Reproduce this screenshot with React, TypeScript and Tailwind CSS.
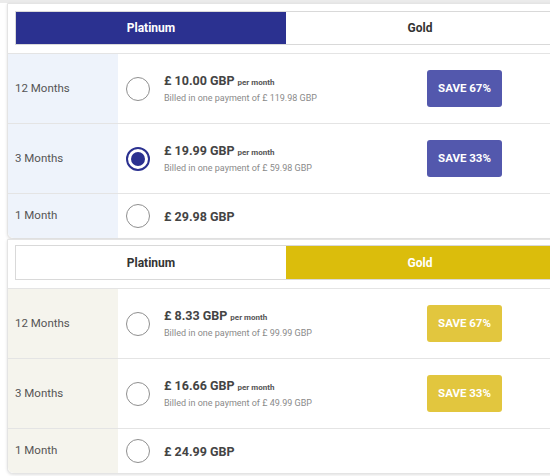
import React from 'react'

type Plan = {
  term: string
  price: string
  perMonth?: boolean
  billed?: string
  save?: string
  checked?: boolean
}

const platinum: Plan[] = [
  { term: '12 Months', price: '£ 10.00 GBP', perMonth: true, billed: 'Billed in one payment of £ 119.98 GBP', save: 'SAVE 67%' },
  { term: '3 Months', price: '£ 19.99 GBP', perMonth: true, billed: 'Billed in one payment of £ 59.98 GBP', save: 'SAVE 33%', checked: true },
  { term: '1 Month', price: '£ 29.98 GBP' },
]

const gold: Plan[] = [
  { term: '12 Months', price: '£ 8.33 GBP', perMonth: true, billed: 'Billed in one payment of £ 99.99 GBP', save: 'SAVE 67%' },
  { term: '3 Months', price: '£ 16.66 GBP', perMonth: true, billed: 'Billed in one payment of £ 49.99 GBP', save: 'SAVE 33%' },
  { term: '1 Month', price: '£ 24.99 GBP' },
]

function Radio({ checked }: { checked?: boolean }) {
  if (checked) {
    return (
      <span className="flex h-[24px] w-[24px] shrink-0 items-center justify-center rounded-full border-2 border-[#2b3190] bg-white">
        <span className="h-[14px] w-[14px] rounded-full bg-[#2b3190]" />
      </span>
    )
  }
  return <span className="h-[24px] w-[24px] shrink-0 rounded-full border border-[#8f8f8f] bg-white" />
}

function PlanCard({ tier, plans, top }: { tier: 'platinum' | 'gold'; plans: Plan[]; top: string }) {
  const isGold = tier === 'gold'
  return (
    <div className={`ml-[7px] w-[556px] rounded-b-md border border-[#e4e4e4] bg-white shadow-[0_1px_3px_rgba(0,0,0,0.12)] ${top}`}>
      {/* Tier switch */}
      <div className="px-[7px] pb-2">
        <div className={`flex border border-[#d9d9d9] text-[12px] font-bold ${isGold ? 'h-[35px]' : 'h-[34px]'}`}>
          <div className={`flex w-[270px] items-center justify-center ${isGold ? 'bg-white text-[#333]' : 'bg-[#2b3190] text-white'}`}>
            Platinum
          </div>
          <div className={`flex flex-1 items-center justify-center ${isGold ? 'bg-[#dbbd0c] text-white' : 'bg-white text-[#333]'}`}>
            Gold
          </div>
        </div>
      </div>

      {/* Plan rows */}
      {plans.map((p, i) => {
        const last = i === plans.length - 1
        return (
          <div key={p.term} className={`flex border-t border-[#e4e4e4] ${last ? 'h-[45px]' : 'h-[70px]'}`}>
            <div className={`flex w-[110px] shrink-0 items-center pl-[7px] text-[11.5px] text-[#555] ${isGold ? 'bg-[#f5f4ed]' : 'bg-[#eef3fb]'} ${last ? 'rounded-bl-md' : ''}`}>
              {p.term}
            </div>
            <div className="flex flex-1 items-center pl-2">
              <Radio checked={p.checked} />
              <div className="ml-[14px] w-[263px] shrink-0">
                <div className="text-[12.5px] font-bold leading-[15px] text-[#444]">
                  {p.price}
                  {p.perMonth && <span className="ml-[3px] text-[8px] font-bold text-[#555]">per month</span>}
                </div>
                {p.billed && <div className="mt-[3px] text-[9px] leading-[11px] text-[#8a8a8a]">{p.billed}</div>}
              </div>
              {p.save && (
                <div
                  className={`flex h-[37px] w-[75px] items-center justify-center rounded-[3px] text-[11.5px] font-bold text-white ${
                    isGold ? 'bg-[#e2c63e]' : 'bg-[#5358ad]'
                  }`}
                >
                  {p.save}
                </div>
              )}
            </div>
          </div>
        )
      })}
    </div>
  )
}

export default function App() {
  return (
    <div className="h-[476px] w-[550px] overflow-hidden bg-white font-['Roboto',sans-serif]">
      <div className="h-[3px] bg-[#ebebeb]" />
      <PlanCard tier="platinum" plans={platinum} top="pt-[7px]" />
      <PlanCard tier="gold" plans={gold} top="pt-[5px]" />
    </div>
  )
}
